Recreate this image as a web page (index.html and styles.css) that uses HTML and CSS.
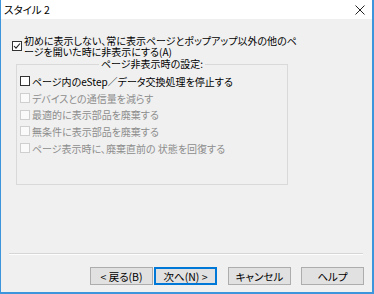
FILE: index.html
```html
<!DOCTYPE html>
<html lang="ja">
<head>
    <meta charset="UTF-8">
    <title>スタイル 2</title>
    <link rel="stylesheet" href="styles.css">
</head>
<body>
    <div class="window">
        <div class="titlebar">
            <span class="title">スタイル 2</span>
            <svg class="close" width="10" height="10" viewBox="0 0 10 10">
                <path d="M0.5 0.5 L9.5 9.5 M9.5 0.5 L0.5 9.5" stroke="#222" stroke-width="1" fill="none"/>
            </svg>
        </div>

        <div class="content">
            <div class="main-check">
                <span class="box checked">
                    <svg width="8" height="8" viewBox="0 0 8 8">
                        <path d="M1 4 L3 6.2 L7 1.5" stroke="#222" stroke-width="1.1" fill="none"/>
                    </svg>
                </span>
                <span class="main-text">初めに表示しない、常に表示ページとポップアップ以外の他のペ<br>ージを開いた時に非表示にする(A)</span>
            </div>

            <fieldset class="group">
                <legend>ページ非表示時の設定:</legend>
                <div class="option"><span class="box"></span>ページ内のeStep／データ交換処理を停止する</div>
                <div class="option disabled"><span class="box"></span>デバイスとの通信量を減らす</div>
                <div class="option disabled"><span class="box"></span>最適的に表示部品を廃棄する</div>
                <div class="option disabled"><span class="box"></span>無条件に表示部品を廃棄する</div>
                <div class="option disabled"><span class="box"></span>ページ表示時に、廃棄直前の 状態を回復する</div>
            </fieldset>

            <div class="spacer"></div>

            <div class="separator"></div>

            <div class="buttons">
                <button class="btn back">&lt; 戻る(B)</button>
                <button class="btn next default">次へ(N) &gt;</button>
                <button class="btn cancel">キャンセル</button>
                <button class="btn">ヘルプ</button>
            </div>
        </div>
    </div>
</body>
</html>
```

FILE: styles.css
```css
body {
    margin: 0;
    font-family: "Noto Sans CJK JP", "Noto Sans", sans-serif;
    font-feature-settings: "palt";
    font-size: 10px;
    color: #000;
    background: #fff;
}

.window {
    width: 374px;
    height: 294px;
    box-sizing: border-box;
    border-left: 1px solid #3d95dc;
    border-right: 2px solid #3d95dc;
    border-bottom: 2px solid #3d95dc;
    display: flex;
    flex-direction: column;
    background: #f0f0f0;
}

.titlebar {
    height: 19px;
    background: #fff;
    display: flex;
    align-items: center;
    justify-content: space-between;
    padding: 0 7px 0 3px;
}

.title {
    font-size: 10.5px;
    line-height: 12px;
}

.close {
    display: block;
}

.content {
    flex: 1;
    display: flex;
    flex-direction: column;
}

.main-check {
    display: flex;
    align-items: center;
    margin: 16px 0 0 11px;
}

.main-text {
    line-height: 11px;
    margin-left: 2px;
}

.box {
    width: 10px;
    height: 10px;
    box-sizing: border-box;
    border: 1px solid #333;
    background: #fff;
    display: inline-flex;
    align-items: center;
    justify-content: center;
    flex-shrink: 0;
}

.group {
    margin: 1px 0 0 15px;
    width: 272px;
    box-sizing: border-box;
    padding: 3px 3px 28px 3px;
    border: 1px solid #d9d9d9;
    min-width: 0;
}

.group legend {
    margin: 0 auto;
    padding: 0 2px;
    line-height: 12px;
}

.option {
    height: 16.7px;
    display: flex;
    align-items: center;
}

.option .box {
    margin-right: 2px;
}

.option.disabled {
    color: #8d8d8d;
}

.option.disabled .box {
    border-color: #cfcfcf;
    background: #fafafa;
}

.spacer {
    flex: 1;
}

.separator {
    margin: 0 9px 0 8px;
    height: 1px;
    background: #d6d6d6;
    border-bottom: 1px solid #fdfdfd;
}

.buttons {
    display: flex;
    justify-content: flex-end;
    padding: 12px 8px 7px 0;
}

.btn {
    width: 63px;
    height: 18px;
    padding: 0;
    font-family: inherit;
    font-feature-settings: "palt";
    font-size: 10.5px;
    color: #000;
    background: #e1e1e1;
    border: 1px solid #adadad;
}

.btn.back {
    margin-right: 1px;
}

.btn.next {
    margin-right: 11px;
}

.btn.cancel {
    margin-right: 10px;
}

.btn.default {
    border-color: #0078d7;
    box-shadow: inset 0 0 0 1px #0078d7;
}
```
